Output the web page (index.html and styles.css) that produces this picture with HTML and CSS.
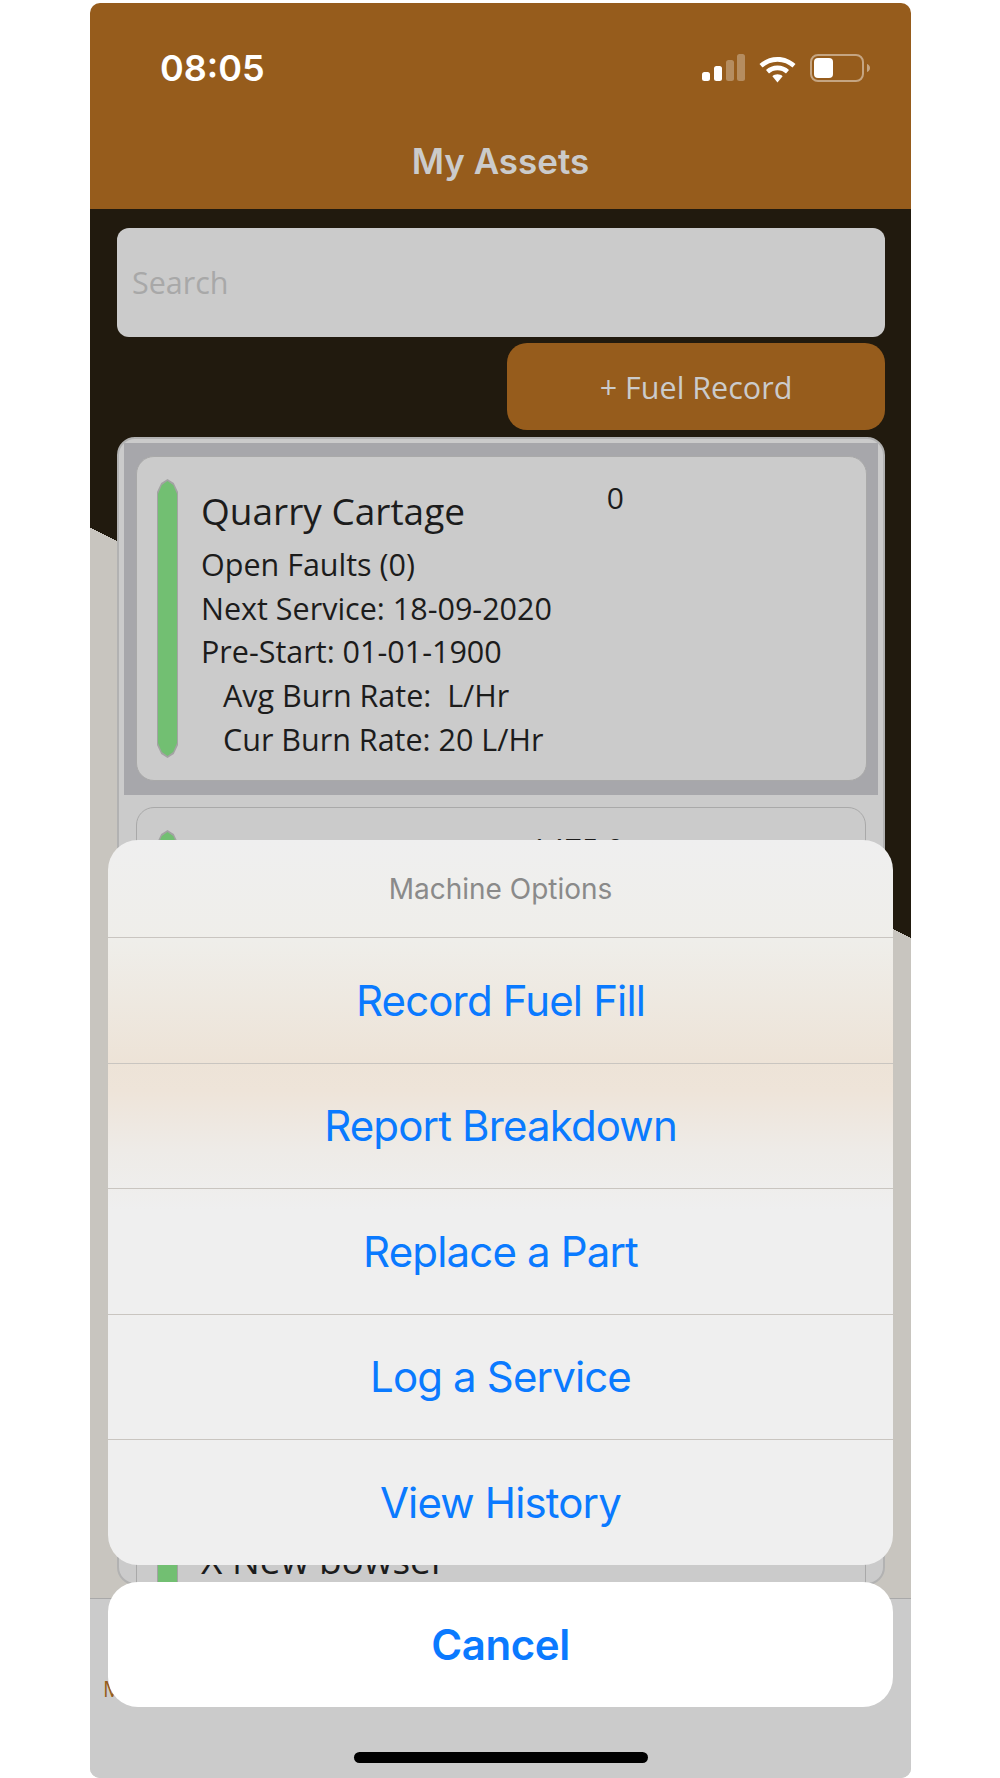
FILE: index.html
```html
<!DOCTYPE html>
<html lang="en">
<head>
    <meta charset="UTF-8">
    <meta name="viewport" content="width=device-width, initial-scale=1.0">
    <title>My Assets</title>
    <link rel="stylesheet" href="styles.css">
</head>
<body>
    <div class="screen">
        <header class="topbar">
            <div class="statusbar">
                <span class="clock">08:05</span>
                <div class="status-icons">
                    <svg class="signal" width="43" height="27" viewBox="0 0 43 27">
                        <rect x="0" y="18" width="8" height="9" rx="2.5" fill="#fff"/>
                        <rect x="12" y="12" width="8" height="15" rx="2.5" fill="#fff"/>
                        <rect x="24" y="6" width="8" height="21" rx="2.5" fill="#fff" fill-opacity="0.3"/>
                        <rect x="35" y="0" width="8" height="27" rx="2.5" fill="#fff" fill-opacity="0.3"/>
                    </svg>
                    <svg class="wifi" width="37" height="26" viewBox="0 0 37 26">
                        <path d="M18.5 0C11.4 0 5.2 2.7 0.5 7.1L3.5 10.6C7.4 7 12.7 4.8 18.5 4.8S29.6 7 33.5 10.6L36.5 7.1C31.8 2.7 25.6 0 18.5 0Z" fill="#fff"/>
                        <path d="M18.5 8.6C14 8.6 10 10.3 7 13.1L10 16.6C12.2 14.5 15.2 13.3 18.5 13.3S24.8 14.5 27 16.6L30 13.1C27 10.3 23 8.6 18.5 8.6Z" fill="#fff"/>
                        <path d="M18.5 17.3C16.5 17.3 14.7 18 13.4 19.2L18.5 25.6L23.6 19.2C22.3 18 20.5 17.3 18.5 17.3Z" fill="#fff"/>
                    </svg>
                    <svg class="battery" width="60" height="28" viewBox="0 0 60 28">
                        <rect x="1" y="1" width="52" height="26" rx="7" fill="none" stroke="#fff" stroke-opacity="0.45" stroke-width="2"/>
                        <rect x="4" y="4" width="19" height="20" rx="4" fill="#fff"/>
                        <path d="M57 10C58.6 10.6 60 12 60 14S58.6 17.4 57 18Z" fill="#fff" fill-opacity="0.45"/>
                    </svg>
                </div>
            </div>
            <h1 class="page-title">My Assets</h1>
        </header>

        <main class="content">
            <div class="search">Search</div>
            <div class="actions">
                <button class="fuel-btn">+ Fuel Record</button>
            </div>

            <div class="asset-list">
                <div class="asset-row selected">
                    <div class="asset-card">
                        <div class="status-pill"></div>
                        <div class="asset-info">
                            <div class="asset-head">
                                <div class="asset-name">Quarry Cartage</div>
                                <div class="asset-hours">0</div>
                            </div>
                            <div class="asset-line">Open Faults (0)</div>
                            <div class="asset-line">Next Service: 18-09-2020</div>
                            <div class="asset-line">Pre-Start: 01-01-1900</div>
                            <div class="asset-line indent">Avg Burn Rate:&nbsp; L/Hr</div>
                            <div class="asset-line indent">Cur Burn Rate: 20 L/Hr</div>
                        </div>
                    </div>
                </div>
                <div class="asset-row">
                    <div class="asset-card">
                        <div class="status-pill"></div>
                        <div class="asset-info">
                            <div class="asset-head">
                                <div class="asset-name"></div>
                                <div class="asset-hours">1475.0</div>
                            </div>
                        </div>
                    </div>
                </div>
                <div class="asset-row">
                    <div class="asset-card"></div>
                </div>
                <div class="asset-row">
                    <div class="asset-card">
                        <div class="status-pill"></div>
                        <div class="asset-info">
                            <div class="asset-name">X New bowser</div>
                        </div>
                    </div>
                </div>
            </div>
        </main>

        <footer class="tabbar">
            <span class="tab-label">M</span>
        </footer>

        <div class="sheet">
            <div class="sheet-group">
                <div class="sheet-title">Machine Options</div>
                <div class="sheet-item">Record Fuel Fill</div>
                <div class="sheet-item">Report Breakdown</div>
                <div class="sheet-item">Replace a Part</div>
                <div class="sheet-item">Log a Service</div>
                <div class="sheet-item">View History</div>
            </div>
            <div class="sheet-cancel">Cancel</div>
        </div>

        <div class="home-bar"></div>
    </div>
</body>
</html>
```

FILE: styles.css
```css
* {
    box-sizing: border-box;
}
body {
    margin: 0;
    background: #fff;
    font-family: "Open Sans", sans-serif;
}
.screen {
    position: relative;
    width: 821px;
    height: 1775px;
    margin: 3px 0 0 90px;
    border-radius: 10px;
    overflow: hidden;
    display: flex;
    flex-direction: column;
}
.topbar {
    height: 206px;
    flex: none;
    background: #965c1c;
}
.statusbar {
    display: flex;
    justify-content: space-between;
    padding: 45px 41px 0 70px;
    height: 138px;
}
.clock {
    font-family: Inter, sans-serif;
    font-weight: 600;
    font-size: 36px;
    line-height: 40px;
    color: #fff;
}
.status-icons {
    display: flex;
    align-items: flex-start;
    gap: 14px;
    padding-top: 6px;
}
.wifi {
    margin-top: 3px;
}
.page-title {
    margin: 0;
    text-align: center;
    font-family: Inter, sans-serif;
    font-weight: 600;
    font-size: 35px;
    line-height: 40px;
    color: #cbcbcb;
}
.content {
    flex: 1;
    min-height: 0;
    padding: 19px 26px 0 27px;
    display: flex;
    flex-direction: column;
    background: linear-gradient(206.57deg, #211a0e 652px, #c8c5bf 652px);
}
.search {
    height: 109px;
    flex: none;
    background: #cbcbcb;
    border-radius: 12px;
    padding: 0 15px;
    font-size: 30.5px;
    line-height: 109px;
    color: #a8a8a8;
}
.actions {
    display: flex;
    justify-content: flex-end;
    margin-top: 6px;
}
.fuel-btn {
    width: 378px;
    height: 87px;
    border: none;
    border-radius: 20px;
    background: #965c1c;
    color: #cbcbcb;
    font-family: "Open Sans", sans-serif;
    font-size: 30.5px;
}
.asset-list {
    margin-top: 7px;
    height: 1148px;
    flex: none;
    background: #cbcbcb;
    border: 2px solid #b2b2b2;
    border-radius: 18px;
    padding-top: 4px;
    overflow: hidden;
}
.asset-row {
    padding: 12px 17px 14px;
}
.asset-row.selected {
    margin: 0 5px;
    background: #a7a7ab;
    padding: 13px 11px 14px 12px;
}
.asset-card {
    display: flex;
    gap: 23px;
    border: 1px solid #a9a9a9;
    border-radius: 18px;
    background: #cbcbcb;
    padding: 22px 20px;
    height: 323px;
    color: #1c1c1c;
}
.selected .asset-card {
    height: 325px;
}
.status-pill {
    position: relative;
    width: 21px;
    flex: none;
    background: #a3a3a3;
    clip-path: polygon(50% 0, 80% 4px, 100% 13px, 100% calc(100% - 13px), 80% calc(100% - 4px), 50% 100%, 20% calc(100% - 4px), 0 calc(100% - 13px), 0 13px, 20% 4px);
}
.status-pill::before {
    content: "";
    position: absolute;
    inset: 2px 1px;
    background: #72bf72;
    clip-path: polygon(50% 0, 80% 4px, 100% 13px, 100% calc(100% - 13px), 80% calc(100% - 4px), 50% 100%, 20% calc(100% - 4px), 0 calc(100% - 13px), 0 13px, 20% 4px);
}
.asset-info {
    flex: 1;
}
.asset-head {
    display: flex;
    justify-content: space-between;
    width: 423px;
    height: 64px;
}
.asset-name {
    font-size: 37px;
    line-height: 50px;
    padding-top: 7px;
}
.asset-hours {
    font-size: 30px;
    line-height: 34px;
    padding-top: 2px;
}
.asset-line {
    font-size: 30.5px;
    line-height: 43.7px;
}
.asset-line.indent {
    padding-left: 22px;
}
.tabbar {
    position: absolute;
    left: 0;
    right: 0;
    bottom: 0;
    height: 180px;
    background: #cbcbcb;
    border-top: 1px solid #a9a9a9;
}
.tab-label {
    position: absolute;
    left: 13px;
    top: 76px;
    font-size: 21px;
    color: #965c1c;
}
.sheet {
    position: absolute;
    left: 18px;
    right: 18px;
    top: 837px;
    display: flex;
    flex-direction: column;
    gap: 17px;
    font-family: Inter, sans-serif;
}
.sheet-group {
    border-radius: 30px;
    overflow: hidden;
    background: linear-gradient(180deg, #efefef 0, #efeeea 100px, #ede3d7 222px, #eee4d9 250px, #eeebe7 310px, #efefef 370px, #efefef 100%);
}
.sheet-title {
    height: 97px;
    display: flex;
    align-items: center;
    justify-content: center;
    font-size: 28px;
    color: #8a8a8a;
}
.sheet-item {
    height: 125.5px;
    display: flex;
    align-items: center;
    justify-content: center;
    font-size: 42px;
    letter-spacing: -0.85px;
    color: #0a7aff;
    border-top: 1px solid #c9c5c0;
}
.sheet-cancel {
    height: 125px;
    display: flex;
    align-items: center;
    justify-content: center;
    font-size: 42px;
    font-weight: 600;
    letter-spacing: -0.4px;
    color: #0a7aff;
    background: #fff;
    border-radius: 30px;
}
.home-bar {
    position: absolute;
    left: 264px;
    top: 1749px;
    width: 294px;
    height: 11px;
    border-radius: 6px;
    background: #000;
}
```
